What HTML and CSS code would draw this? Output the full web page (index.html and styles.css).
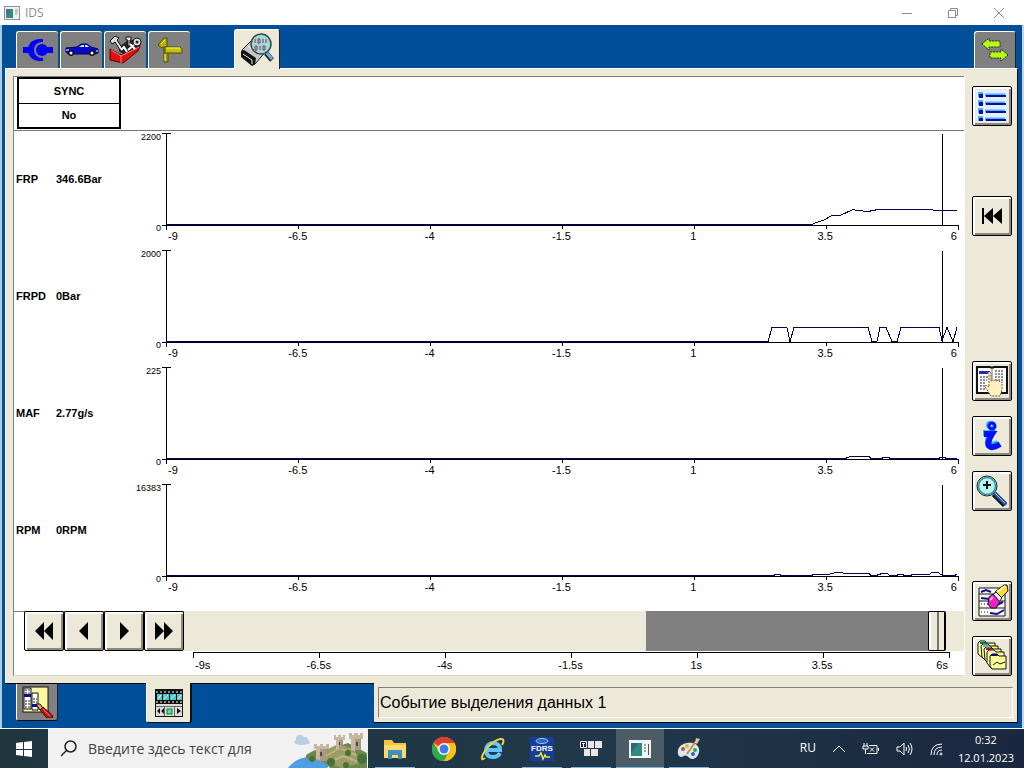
FILE: index.html
```html
<!DOCTYPE html>
<html lang="ru">
<head>
<meta charset="utf-8">
<title>IDS</title>
<link rel="stylesheet" href="styles.css">
</head>
<body>
<header class="titlebar">
  <svg class="app-icon" width="16" height="14" viewBox="0 0 16 14"><rect x=".5" y=".5" width="15" height="13" fill="#eef2f3" stroke="#8a9499"/><rect x="2" y="3" width="7" height="9" fill="#3a8a78"/><rect x="2" y="3" width="4" height="5" fill="#4470a0"/><path d="M11 4h3M11 6h3M11 8h2" stroke="#999"/></svg>
  <span class="app-name">IDS</span>
  <button class="win-btn" aria-label="Свернуть"><svg width="12" height="12" viewBox="0 0 12 12"><path d="M1 6.500h10"/></svg></button>
  <button class="win-btn" aria-label="Развернуть"><svg width="12" height="12" viewBox="0 0 12 12"><path d="M1.500 3.500h7v7h-7zM3.500 3.500v-2h7v7h-2"/></svg></button>
  <button class="win-btn" aria-label="Закрыть"><svg width="12" height="12" viewBox="0 0 12 12"><path d="M1 1l10 10M11 1L1 11"/></svg></button>
</header>

<main class="app">
  <nav class="tabs">
    <button class="tab" aria-label="Подключение"><svg width="32" height="26" viewBox="0 0 32 26"><path d="M1 10h7v6H1z" fill="#00f"/><path d="M21 2v22h-3C10 24 6 19 6 13S10 2 18 2z" fill="#00f"/><circle cx="20" cy="13" r="8" fill="#808080"/><circle cx="20" cy="13" r="6" fill="#00f"/><path d="M22 10h9v6h-9z" fill="#00f"/></svg></button>
    <button class="tab" aria-label="Автомобиль"><svg width="34" height="16" viewBox="0 0 34 16"><path d="M1 6l11-1 4-3h6l4 3 7 2v4l-3 1H3l-2-2z" fill="#0808c8" stroke="#000060"/><path d="M14 5l3-2h2v2zM20 3h2l2 2h-4z" fill="#cfe8ff"/><circle cx="6" cy="11" r="3" fill="#111"/><circle cx="6" cy="11" r="1.500" fill="#eee"/><circle cx="27" cy="11" r="3" fill="#111"/><circle cx="27" cy="11" r="1.500" fill="#eee"/><path d="M1 8h3M31 9h2" stroke="#fff"/></svg></button>
    <button class="tab" aria-label="Инструменты"><svg width="34" height="30" viewBox="0 0 34 30"><path d="M1 14l11 6 19-9-2 5-15 12L1 25z" fill="#e01010" stroke="#500"/><path d="M12 20v8M2 15l10 6 18-9" stroke="#ff8080" fill="none"/><path d="M10 12l8-6 12-2 2 6-18 9-4-3z" fill="#222"/><path d="M1 6l5-5 4 2-2 2 6 9-3 1-5-8-3 2z" fill="#ddd" stroke="#111"/><path d="M17 2h5v3h-1v6h-2V5h-2z" fill="#eee" stroke="#111"/><circle cx="28" cy="7" r="4" fill="#ddd" stroke="#111"/><circle cx="28" cy="7" r="1.500" fill="#222"/><path d="M12 15l3-3 3 5M19 15l6-5M21 9l5 5" stroke="#fff" stroke-width="2" fill="none"/></svg></button>
    <button class="tab" aria-label="Указатель"><svg width="26" height="26" viewBox="0 0 26 26"><path d="M7 9h4v16H7z" fill="#a9a000" stroke="#555000"/><path d="M1 8l6-7h3v8l-5 2z" fill="#b8b000" stroke="#555000"/><path d="M8 10h15l2 2v4H8z" fill="#c8c000" stroke="#555000"/><path d="M9 11h14M4 7l4-4M8 17v7" stroke="#ffff60"/></svg></button>
    <button class="tab tab-active" aria-label="Регистратор данных"><svg width="34" height="34" viewBox="0 0 34 34"><path d="M2 17L15 4l12 13-12 14-3 1z" fill="#c8c8c8" stroke="#222"/><path d="M1 18l3-1 12 8-1 6-3 2L1 24z" fill="#111"/><path d="M3 21l9 6v4" stroke="#eee" fill="none"/><path d="M8 13l11 9M11 10l11 9" stroke="#fff"/><path d="M26 20l6 7" stroke="#222" stroke-width="5"/><path d="M26 19l6 7" stroke="#66aef0" stroke-width="3"/><circle cx="21" cy="11" r="10" fill="#98dce0" stroke="#444" stroke-width="1.500"/><path d="M15 6v4M18 6h2v4h-2zM23 6v4M26 6v4M15 13h2v4h-2zM20 13v4M23 13h2v4h-2z" fill="none" stroke="#963748"/></svg></button>
    <button class="tab tab-end" aria-label="Обмен"><svg width="28" height="24" viewBox="0 0 28 24"><path d="M1 6l7-6v3h11v6H8v3zM27 17l-7-6v3H9v6h11v3z" fill="#b6ff10" stroke="#222" stroke-dasharray="2 1"/></svg></button>
  </nav>

  <div class="frame">
    <section class="sheet">
      <div class="sync-row"><dl class="sync"><dt>SYNC</dt><dd>No</dd></dl></div>

      <div class="charts">
        <article class="chart">
          <strong class="pid">FRP</strong><strong class="reading">346.6Bar</strong>
          <div class="yaxis"><span>2200</span><span>0</span></div>
          <div class="plot">
            <svg viewBox="0 0 793 97" preserveAspectRatio="none"><path class="axis" d="M-4 .5H5M.5 0V97M-4 92.500H792.500V97M132.500 92v4M264.500 92v4M396.500 92v4M528.500 92v4M660.500 92v4M776.500 1V92"/><polyline class="trace" points="0,91.500 646,91.500 650,89.500 657,87.500 666,82.500 674,82.500 687,76.500 691,77.500 702,78.500 712,76.500 766,76.500 768,77.500 791,77.500"/></svg>
            <div class="ticks"><span>-9</span><span>-6.5</span><span>-4</span><span>-1.5</span><span>1</span><span>3.5</span><span>6</span></div>
          </div>
        </article>
        <article class="chart">
          <strong class="pid">FRPD</strong><strong class="reading">0Bar</strong>
          <div class="yaxis"><span>2000</span><span>0</span></div>
          <div class="plot">
            <svg viewBox="0 0 793 97" preserveAspectRatio="none"><path class="axis" d="M-4 .5H5M.5 0V97M-4 92.500H792.500V97M132.500 92v4M264.500 92v4M396.500 92v4M528.500 92v4M660.500 92v4M776.500 1V92"/><polyline class="trace" points="0,91.500 602,91.500 606,77.500 621,77.500 624,91.500 628,77.500 702,77.500 706,91.500 711,91.500 714,77.500 720,77.500 726,91.500 731,91.500 735,77.500 773,77.500 776,90.500 781,77.500 787,91.500 791,77.500"/></svg>
            <div class="ticks"><span>-9</span><span>-6.5</span><span>-4</span><span>-1.5</span><span>1</span><span>3.5</span><span>6</span></div>
          </div>
        </article>
        <article class="chart">
          <strong class="pid">MAF</strong><strong class="reading">2.77g/s</strong>
          <div class="yaxis"><span>225</span><span>0</span></div>
          <div class="plot">
            <svg viewBox="0 0 793 97" preserveAspectRatio="none"><path class="axis" d="M-4 .5H5M.5 0V97M-4 92.500H792.500V97M132.500 92v4M264.500 92v4M396.500 92v4M528.500 92v4M660.500 92v4M776.500 1V92"/><polyline class="trace" points="0,91.500 680,91.500 681,90.500 685,89.500 703,89.500 705,91.500 716,91.500 717,90.500 723,90.500 724,91.500 773,91.500 774,90.500 779,90.500 780,91.500 791,91.500"/></svg>
            <div class="ticks"><span>-9</span><span>-6.5</span><span>-4</span><span>-1.5</span><span>1</span><span>3.5</span><span>6</span></div>
          </div>
        </article>
        <article class="chart">
          <strong class="pid">RPM</strong><strong class="reading">0RPM</strong>
          <div class="yaxis"><span>16383</span><span>0</span></div>
          <div class="plot">
            <svg viewBox="0 0 793 97" preserveAspectRatio="none"><path class="axis" d="M-4 .5H5M.5 0V97M-4 92.500H792.500V97M132.500 92v4M264.500 92v4M396.500 92v4M528.500 92v4M660.500 92v4M776.500 1V92"/><polyline class="trace" points="0,91.500 608,91.500 609,90.500 614,90.500 615,91.500 646,91.500 647,90.500 663,90.500 665,89.500 671,88.500 676,88.500 678,89.500 703,89.500 705,91.500 711,91.500 712,90.500 717,89.500 721,89.500 724,91.500 731,91.500 732,90.500 737,90.500 738,91.500 745,91.500 746,90.500 763,90.500 766,88.500 772,88.500 775,90.500 777,91.500 788,91.500 791,90.500"/></svg>
            <div class="ticks"><span>-9</span><span>-6.5</span><span>-4</span><span>-1.5</span><span>1</span><span>3.5</span><span>6</span></div>
          </div>
        </article>
      </div>

      <div class="player">
        <div class="transport">
          <button class="key" aria-label="Быстро назад"><svg width="18" height="18" viewBox="0 0 18 18"><path d="M9 0v18L0 9zM18 0v18L9 9z"/></svg></button>
          <button class="key" aria-label="Назад"><svg width="18" height="18" viewBox="0 0 18 18"><path d="M13 0v18L4 9z"/></svg></button>
          <button class="key" aria-label="Вперёд"><svg width="18" height="18" viewBox="0 0 18 18"><path d="M5 0v18l9-9z"/></svg></button>
          <button class="key" aria-label="Быстро вперёд"><svg width="18" height="18" viewBox="0 0 18 18"><path d="M0 0v18l9-9zM9 0v18l9-9z"/></svg></button>
        </div>
        <div class="timeline">
          <div class="track"><input class="scrub" type="range" min="-9" max="6" step="0.01" value="5.76" aria-label="Время, с"></div>
          <div class="scale">
            <svg viewBox="0 0 757 6" preserveAspectRatio="none"><path class="axis" d="M.5 6V.5H756.500V6M126.500 0v6M252.500 0v6M378.500 0v6M504.500 0v6M630.500 0v6"/></svg>
            <div class="ticks"><span>-9s</span><span>-6.5s</span><span>-4s</span><span>-1.5s</span><span>1s</span><span>3.5s</span><span>6s</span></div>
          </div>
        </div>
      </div>
    </section>

    <aside class="tools">
      <button class="key" aria-label="Список"><svg width="32" height="32" viewBox="0 0 32 32"><rect width="32" height="32" fill="#e4f0ff"/><path d="M2 2h5v5H2zM2 10h5v5H2zM2 18h5v5H2zM2 26h5v5H2z" fill="#50b0ff"/><path d="M9 5h20M9 13h20M9 21h20M9 29h20" stroke="#50b0ff" stroke-width="3"/><path d="M3 4h4v4H3zM3 12h4v4H3zM3 20h4v4H3zM3 28h4v3H3z" fill="#0010a0"/><path d="M10 6h20M10 14h20M10 22h20M10 30h20" stroke="#0010a0" stroke-width="2"/></svg></button>
      <button class="key slot-rewind" aria-label="В начало"><svg width="22" height="18" viewBox="0 0 22 18"><path d="M1 1h2v16H1zM12 1v16L3 9zM21 1v16l-9-8z"/></svg></button>
      <button class="key slot-pick" aria-label="Выбор данных"><svg width="32" height="32" viewBox="0 0 32 32"><path d="M1 2h13l2 1 2-1h13v26H18l-2 1-2-1H1z" fill="#fff" stroke="#111" stroke-width="2"/><path d="M16 3v26" stroke="#777"/><path d="M3 6h11v3H3z" fill="#2030a0"/><path d="M4 12h9M4 15h7M4 18h6M4 21h5M4 24h5M19 6h9M19 9h9M19 12h9M19 15h9" stroke="#222" stroke-dasharray="2 1"/><path d="M11 8q2-2 4 0v8l3-1 2 1 2-1 2 2 2 0v8l-2 6H15l-6-9 1-2 3 2V9z" fill="#fff1c0" stroke="#6f5d30" stroke-dasharray="2 1"/></svg></button>
      <button class="key slot-info" aria-label="Информация"><svg width="26" height="32" viewBox="0 0 26 32"><g fill="none" stroke="#20b8ff" stroke-width="6"><circle cx="11" cy="5" r="1"/><path d="M4 13h8q-4 7-3 11 2 3 10-1"/></g><g fill="none" stroke="#0010f8" stroke-width="6"><circle cx="13" cy="6" r="1.500"/><path d="M5 14h8q-5 8-3 12 3 3 11-2"/></g></svg></button>
      <button class="key slot-zoom" aria-label="Увеличить"><svg width="34" height="34" viewBox="0 0 34 34"><path d="M19 20l11 11" stroke="#111" stroke-width="6"/><path d="M19 19l12 12" stroke="#2058d0" stroke-width="3"/><path d="M20 19l10 10" stroke="#a5d8ff"/><circle cx="12" cy="12" r="10" fill="#aaf0e5" stroke="#222"/><circle cx="12" cy="12" r="8.500" fill="#b6f5ef" stroke="#3090a0" stroke-width="1.500"/><path d="M12 7v8M8 11h8" stroke="#111" stroke-width="2"/></svg></button>
      <button class="key slot-erase" aria-label="Стереть"><svg width="34" height="34" viewBox="0 0 34 34"><path d="M4 4h26v28H4z" fill="#fff" stroke="#111"/><path d="M4 10h26M4 17h26M4 24h26" stroke="#111"/><path d="M6 8l5-2 5 2M6 14l8 1M20 22l8-4M15 29l7 1 7-4" stroke="#101090" stroke-width="2" fill="none"/><path d="M6 20h12M6 28h8" stroke="#111" stroke-dasharray="1 2"/><path d="M20 8l9-7h3l1 6-9 9z" fill="#ffe020" stroke="#111"/><path d="M22 8l8-6" stroke="#fff8a0" stroke-width="2"/><path d="M17 11l4-3 6 6-3 4z" fill="#e8f0ff" stroke="#111"/><path d="M14 13l4-3 7 8-4 6h-5l-3-4z" fill="#f020c0" stroke="#111"/><path d="M15 16l3-3" stroke="#ffb0e8" stroke-width="2"/></svg></button>
      <button class="key slot-cards" aria-label="Записи"><svg width="34" height="34" viewBox="0 0 34 34"><g fill="#ffff9c" stroke="#111"><path d="M3 4l2-2h5l2 2h8v14l-11 2-6-5z"/><path d="M6 7l2-2h5l2 2h8v14l-11 2-5-5z"/><path d="M9 10l2-2h5l2 2h8v14l-11 2-5-5z"/><path d="M12 13l2-2h5l2 2h8v15l-13 1-4-5z"/><path d="M15 17l2-2h5l2 2h7v13H17l-2-3z"/></g><path d="M5 3h6l1 2H5z" fill="#087860"/><path d="M8 6h6l1 2H8z" fill="#42c4c0"/><path d="M11 9h6l1 2h-7z" fill="#a01050"/><path d="M16 15h6l1 2h-7z" fill="#101080"/><path d="M18 26l4-3 3 2 5-2" fill="none" stroke="#111"/></svg></button>
    </aside>
  </div>

  <footer class="lower">
    <div class="lower-tabs">
      <button class="tab tab-low" aria-label="Просмотр"><svg width="32" height="32" viewBox="0 0 32 32"><rect x="2" y="1" width="25" height="25" fill="#fff8a0" stroke="#111"/><path d="M3 2h7v21H3zM11 7h6v17h-6z" fill="#fff" stroke="#111"/><path d="M4 4h5M4 7h5M4 15h5M4 18h5M4 21h5M12 13h4M12 16h4" stroke="#222" stroke-dasharray="2 1"/><path d="M3 8h7v3H3zM11 18h6v3h-6z" fill="#10108c"/><path d="M15 18l4 0 3 4-3 2z" fill="#d8b060" stroke="#111"/><path d="M19 24l3-3 10 9v2h-6z" fill="#d01010" stroke="#400"/><path d="M22 23l7 7" stroke="#ff9080"/></svg></button>
      <button class="tab tab-low tab-low-active" aria-label="Запись"><svg width="28" height="28" viewBox="0 0 28 28"><rect x=".5" y=".5" width="27" height="27" fill="#ddd" stroke="#111"/><path d="M1 1h26v14H1z" fill="#111"/><path d="M1 3h26M1 13h26" stroke="#fff" stroke-width="1" stroke-dasharray="2 2"/><path d="M2 5h5v6H2zM8 5h6v6H8zM15 5h6v6h-6zM22 5h5v6h-5z" fill="#50c8d0"/><path d="M3 10l3-4M9 10l4-4M16 10l4-4M23 10l3-4" stroke="#d0ffff"/><path d="M1 17.500h26M9.500 17v10M19.500 17v10" stroke="#666"/><path d="M5 19v6l-3-3zM9 19v6l-3-3zM22 19v6l4-3z" fill="#111"/><rect x="12" y="20" width="5" height="5" fill="#50e890" stroke="#187838"/></svg></button>
    </div>
    <div class="status"><output class="status-text">Событие выделения данных 1</output></div>
  </footer>
</main>

<div class="taskbar">
  <button class="start" aria-label="Пуск"><svg width="16" height="16" viewBox="0 0 16 16"><path d="M0 2l7-1v7H0zM8 1l8-1v8H8zM0 9h7v6l-7-1zM8 9h8v7l-8-1z" fill="#fff"/></svg></button>
  <label class="search">
    <svg width="17" height="17" viewBox="0 0 17 17"><circle cx="10.500" cy="6.500" r="5.500" fill="none" stroke="#222" stroke-width="1.500"/><path d="M6.500 10.500L1 16" stroke="#222" stroke-width="1.500"/></svg>
    <input type="text" placeholder="Введите здесь текст для" aria-label="Поиск">
    <svg class="castle" width="80" height="39" viewBox="0 0 80 39"><g fill="#b9cee3"><ellipse cx="14" cy="13" rx="8" ry="3"/><circle cx="12" cy="10" r="4"/><circle cx="17" cy="11" r="3"/></g><path d="M0 39q14-18 45-7l-6 7z" fill="#4c9fe4"/><path d="M18 26q12-8 24-6l18-6 19 10v15H42q-5-8-24-9z" fill="#6b8a49"/><path d="M36 22l14-7 16 5 7 14-20 5-20-9z" fill="#9c9e61"/><path d="M38 27l14-8 16 7M42 33l13-6 16 6" stroke="#bfb08b" stroke-width="2" fill="none"/><g fill="#a89984"><path d="M28 19h10v12q-5 3-10 0zM48 9h7v11h-7zM63 8h10v13H63z"/></g><g fill="#c6b89e"><path d="M28 19h4v12l-4-1zM48 9h3v11h-3zM63 8h4v14l-4-1z"/><path d="M26 15h3v2h3v-2h3v2h3v-2h3v5H26zM46 6h2v2h2V6h3v2h2V6h2v5H46zM61 4h3v2h2V4h4v2h2V4h3v6H61z"/></g><path d="M32 23h2v4h-2zM68 13h2v4h-2zM51 13h1v3h-1z" fill="#54483b"/><g fill="#48703a"><circle cx="24" cy="30" r="3"/><circle cx="43" cy="33" r="4"/><circle cx="60" cy="24" r="3"/><circle cx="74" cy="30" r="5"/><circle cx="58" cy="36" r="3"/></g></svg>
  </label>
  <div class="apps">
    <button class="task running" aria-label="Проводник"><svg width="24" height="22" viewBox="0 0 24 22"><path d="M1 2h8l2 3h12v15H1z" fill="#f5c344"/><path d="M1 7h22v13H1z" fill="#ffd96b"/><path d="M5 12h14v9h-4v-4H9v4H5z" fill="#3d8fc4"/></svg></button>
    <button class="task" aria-label="Chrome"><svg width="24" height="24" viewBox="0 0 24 24"><circle cx="12" cy="12" r="12" fill="#fbc116"/><path d="M12 12L1.600 6A12 12 0 0 1 22.400 6H12z" fill="#e33b2e"/><path d="M1.600 6A12 12 0 0 0 12 24l5-9-10 0z" fill="#2da94f"/><path d="M12 6h10.400A12 12 0 0 1 12 24l5-9z" fill="#fbc116"/><circle cx="12" cy="12" r="6" fill="#fff"/><circle cx="12" cy="12" r="4.500" fill="#3b7ded"/></svg></button>
    <button class="task" aria-label="Internet Explorer"><svg width="26" height="24" viewBox="0 0 26 24"><path d="M20 16q-2 4-7 4-7 0-7-7 1-7 8-7 6 1 6 7H8" fill="none" stroke="#5fc5f4" stroke-width="4"/><path d="M5 21q-4 3-3-1C4 12 16 1 22 2q3 1 0 6" fill="none" stroke="#f3cf42" stroke-width="2"/></svg></button>
    <button class="task running" aria-label="FDRS"><svg width="24" height="24" viewBox="0 0 24 24"><rect width="24" height="24" fill="#173c9c"/><ellipse cx="12" cy="4" rx="6" ry="2.500" fill="#2d69b5" stroke="#9fc4ea"/><text x="12" y="14" text-anchor="middle" class="fdrs">FDRS</text><path d="M5 19h4l2-3 2 6 2-4 1 2h4" fill="none" stroke="#e7ed34" stroke-width="1.500"/></svg></button>
    <button class="task running" aria-label="Клавиатура"><svg width="24" height="18" viewBox="0 0 24 18"><g fill="#e6e6e6"><path d="M9 1h6v7H9zM16 1h7v7h-7zM5 9h6v7H5zM12 9h7v7h-7z"/></g><path d="M1.500 1.500h6v6h-6z" fill="#10184f" stroke="#eee"/><path d="M3 3.500h3M4.500 3v4" stroke="#fff"/></svg></button>
    <button class="task running current" aria-label="IDS"><svg width="22" height="18" viewBox="0 0 22 18"><rect width="22" height="18" fill="#f2f4f4"/><path d="M2 3h11v13H2z" fill="#2e8c7c"/><path d="M2 3h8L2 13z" fill="#345f91"/><path d="M15 5h2M15 8h2M15 11h2M19.500 4v11" stroke="#555"/></svg></button>
    <button class="task running" aria-label="Paint"><svg width="24" height="24" viewBox="0 0 24 24"><path d="M10 6C3 7 0 12 1 17c1 4 5 3 6 2 3-2 5 3 8 3 5 0 8-6 7-10-1-5-6-7-12-6z" fill="#d9e9f2"/><circle cx="6" cy="12" r="2" fill="#d04b30"/><circle cx="10" cy="9" r="2" fill="#f0b22e"/><circle cx="16" cy="17" r="2" fill="#2e62c8"/><circle cx="18" cy="13" r="2" fill="#35a053"/><path d="M10 17l9-13" stroke="#d98a3c" stroke-width="2"/><path d="M18 6l1-5 4 1-3 5z" fill="#e3c495"/></svg></button>
  </div>
  <div class="tray">
    <span class="lang">RU</span>
    <svg width="14" height="14" viewBox="0 0 14 14"><path d="M1 10l6-6 6 6"/></svg>
    <svg width="18" height="14" viewBox="0 0 18 14"><path d="M2 1v3M5 1v3M1 4h5v3H1zM3.500 7v5M7 3.500h8v8H5M16.500 6v3M8 5.500l4 4M12 5.500l-4 4"/></svg>
    <svg width="17" height="14" viewBox="0 0 17 14"><path d="M1 5h3l4-4v12L4 9H1zM10 5q1 2 0 4M12 3q3 4 0 8M14 1q4 6 0 12"/></svg>
    <svg width="15" height="14" viewBox="0 0 15 14"><path d="M2 13Q2 2 13 2M5 13q0-8 8-8M8 13q0-5 5-5"/><circle cx="12" cy="12" r="1"/></svg>
    <time class="clock" datetime="2023-01-12T00:32"><span>0:32</span><span>12.01.2023</span></time>
  </div>
</div>
</body>
</html>
```
FILE: styles.css
```css
* { box-sizing: border-box; }

:root {
  --blue: #004f98;
  --face: #ece9d8;
  --shade: #808080;
}

body {
  margin: 0;
  min-height: 100vh;
  display: flex;
  flex-direction: column;
  background: #fff;
  color: #000;
  font-family: "Liberation Sans", Arial, sans-serif;
  font-size: 11px;
}

button { padding: 0; border: 0; background: none; font: inherit; display: flex; align-items: center; justify-content: center; }
svg { display: block; flex: none; }

/* Title bar */
.titlebar { display: flex; align-items: center; height: 25px; padding: 0 2px 0 4px; }
.app-name { margin-left: 5px; margin-right: auto; color: #8c8c8c; font: 12px "Open Sans", sans-serif; }
.win-btn { width: 46px; height: 25px; }
.win-btn svg { fill: none; stroke: #8c8c8c; }

/* Application window */
.app {
  flex: 1;
  display: flex;
  flex-direction: column;
  padding: 4px 4px 5px 3px;
  margin-bottom: 1px;
  background: var(--blue);
  border-left: 2px solid #a9cbe6;
  border-right: 2px solid #c6d3e2;
}

.tabs { display: flex; align-items: flex-end; gap: 2px; height: 39px; padding: 0 2px 0 11px; }
.tab {
  width: 42px;
  height: 37px;
  background: var(--shade);
  border-top: 1px solid #fff;
  border-left: 1px solid #fff;
  border-radius: 3px 3px 0 0;
}
.tab-active { width: 46px; height: 40px; margin: 0 auto -1px 42px; background: var(--face); border-right: 1px solid #222; position: relative; }
.tab-end { margin-left: auto; border-right: 1px solid #222; }

.frame {
  flex: 1;
  display: flex;
  padding: 7px 0 7px 7px;
  background: var(--face);
  border-top: 1px solid #fff;
  border-left: 1px solid #fff;
  border-right: 1px solid #111;
}

.sheet {
  flex: 1;
  min-width: 0;
  display: flex;
  flex-direction: column;
  background: #fff;
  border-top: 1px solid var(--shade);
  border-left: 1px solid var(--shade);
  border-bottom: 1px solid #d8d5c5;
}

.sync-row { padding: 0 0 1px 3px; border-bottom: 1px solid #777; }
.sync { width: 104px; margin: 0; border: 2px solid #000; font-weight: bold; text-align: center; line-height: 24px; }
.sync dt { border-bottom: 1px solid #000; }
.sync dd { margin: 0; line-height: 23px; }

/* Charts */
.chart {
  display: grid;
  grid-template-columns: 40px 60px 45px 1fr;
  height: 117px;
  padding: 2px 5px 0 2px;
}
.pid, .reading { align-self: start; line-height: 92px; }
.yaxis {
  display: flex;
  flex-direction: column;
  justify-content: space-between;
  height: 100px;
  font-size: 9px;
  line-height: 9px;
  text-align: right;
}
.plot { margin-left: 5px; min-width: 0; }
.plot svg { width: 100%; height: 97px; overflow: visible; }
.axis { fill: none; stroke: #000; vector-effect: non-scaling-stroke; shape-rendering: crispEdges; }
.trace { fill: none; stroke: #000058; vector-effect: non-scaling-stroke; shape-rendering: crispEdges; }
.ticks { display: flex; line-height: 12px; }
.ticks span { flex: 2 1 0; text-align: center; }
.ticks span:first-child { flex-grow: 1; text-align: left; text-indent: 2px; }
.ticks span:last-child { flex-grow: 1; text-align: right; padding-right: 2px; }

/* Player */
.player { display: flex; margin-top: auto; }
.transport { display: flex; height: 40px; padding-left: 10px; border-top: 1px solid #777; }
.transport .key { margin-top: -1px; }
.key {
  width: 40px;
  height: 40px;
  background: var(--face);
  border: 1px solid #000;
  border-radius: 2px;
  box-shadow: inset 2px 2px 0 #fff, inset -2px -2px 0 #8c897c;
}
.timeline { flex: 1; min-width: 0; }
.track { height: 40px; padding-right: 6px; background: var(--face); }
.scrub {
  display: block;
  appearance: none;
  width: 100%;
  height: 40px;
  margin: 0;
  background: linear-gradient(to right, var(--face) 59.7%, var(--shade) 59.7%, var(--shade) 97%, var(--face) 97%);
}
.scrub::-webkit-slider-thumb {
  appearance: none;
  width: 18px;
  height: 40px;
  border: 1px solid #000;
  border-right-width: 2px;
  border-radius: 2px;
  background: linear-gradient(to right, #fff 2px, var(--face) 2px, var(--face) 8px, #77756c 8px, #77756c 10px, var(--face) 10px);
}
.scale { padding: 1px 14px 3px 9px; }
.scale svg { width: 100%; height: 6px; }
.scale .ticks { line-height: 14px; }

/* Tool column */
.tools { display: grid; grid-auto-rows: 40px; row-gap: 15px; padding: 10px 5px 0 7px; border-left: 1px solid #fff; align-content: start; }
.slot-rewind { grid-row: 3; }
.slot-pick { grid-row: 6; }
.slot-info { grid-row: 7; }
.slot-zoom { grid-row: 8; }
.slot-erase { grid-row: 10; }
.slot-cards { grid-row: 11; }

/* Lower tabs and status line */
.lower { display: flex; height: 40px; }
.lower-tabs { display: flex; flex: 0 0 369px; align-items: flex-start; padding-left: 11px; border-top: 1px solid #000; }
.tab-low { border-top: 0; border-bottom: 1px solid #111; border-right: 1px solid #222; border-radius: 0 0 3px 3px; }
.tab-low-active { width: 46px; height: 40px; margin: -1px 0 0 88px; background: var(--face); border-right: 2px solid #111; }
.status { flex: 1; padding: 4px; background: var(--face); border-right: 1px solid #111; border-bottom: 1px solid #000; }
.status-text {
  display: block;
  height: 31px;
  padding-left: 1px;
  border: 1px solid #fff;
  border-top-color: var(--shade);
  border-left-color: var(--shade);
  font-size: 16px;
  line-height: 29px;
}

/* Taskbar */
.taskbar {
  display: flex;
  height: 40px;
  background: linear-gradient(to right, #20363f, #20384a 60%, #1a2740);
  color: #fff;
  font-family: "Open Sans", sans-serif;
}
.start { width: 48px; }
.search { display: flex; align-items: center; width: 320px; padding-left: 12px; background: #f1f1f1; border-bottom: 1px solid #bbb; }
.search input { flex: 1; min-width: 0; margin-left: 11px; padding: 0; border: 0; outline: 0; background: none; font: 14px "Open Sans", sans-serif; }
.search input::placeholder { color: #444; opacity: 1; }
.castle { margin-left: auto; }
.apps { display: flex; padding-left: 3px; gap: 1px; }
.task { width: 48px; }
.task.running { background: linear-gradient(#76b9ed, #76b9ed) center bottom / 40px 2px no-repeat; }
.task.current { background-color: #4b5c66; background-size: 48px 2px; }
.fdrs { fill: #fff; font: bold 8px "Liberation Sans", sans-serif; }
.tray { display: flex; align-items: center; gap: 16px; margin-left: auto; padding-right: 10px; }
.tray svg { fill: none; stroke: #fff; }
.lang { font-size: 12px; line-height: 16px; padding-bottom: 3px; }
.clock { display: flex; flex-direction: column; text-align: center; font-size: 11px; line-height: 18px; margin-left: -2px; }
```
